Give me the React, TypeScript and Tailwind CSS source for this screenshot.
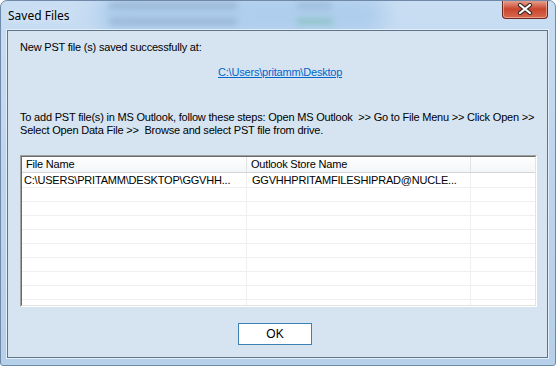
import React from "react";

const rows = Array.from({ length: 10 });

export default function App() {
  return (
    <div className="w-[556px] h-[366px] bg-white">
      <div className="relative w-[556px] h-[366px] flex flex-col overflow-hidden rounded-t-[7px] rounded-b-[3px] border border-[#6f8aa8] bg-gradient-to-b from-[#c9def3] via-[#bcd4ed] to-[#b7d0ea]">
        {/* blurred glass behind the title bar */}
        <div className="absolute left-[95px] top-[-6px] w-[290px] h-[40px] rounded-full bg-[#a7c9ec] blur-[10px] opacity-80" />
        <div className="absolute left-[108px] top-[1px] w-[128px] h-[7px] bg-[#5c7894] blur-[3px] opacity-25" />
        <div className="absolute left-[108px] top-[17px] w-[128px] h-[7px] bg-[#5c7894] blur-[3px] opacity-25" />
        <div className="absolute left-[296px] top-[1px] w-[34px] h-[7px] bg-[#5c7894] blur-[3px] opacity-20" />
        <div className="absolute left-[296px] top-[17px] w-[36px] h-[7px] bg-[#4fb07a] blur-[3px] opacity-30" />

        {/* title bar */}
        <div className="relative h-[29px] flex items-center pl-[7px] shrink-0">
          <span className="text-[12px] text-black [font-family:'Noto_Sans',sans-serif] [text-shadow:0_0_6px_#eef5fc]">
            Saved Files
          </span>
          <button className="absolute top-[-1px] right-[7px] w-[46px] h-[19px] rounded-b-[4px] border border-t-0 border-[#6b2a22] bg-gradient-to-b from-[#e7a898] via-[#c9452d] to-[#d66a4f] flex items-center justify-center shadow-[inset_0_0_0_1px_rgba(255,210,200,0.5)]">
            <svg width="16" height="12" viewBox="0 0 16 12">
              <path d="M3 2 L13 10 M13 2 L3 10" stroke="#3a2a28" strokeWidth="4.2" strokeLinecap="round" />
              <path d="M3 2 L13 10 M13 2 L3 10" stroke="#ffffff" strokeWidth="2.2" strokeLinecap="round" />
            </svg>
          </button>
        </div>

        {/* client area */}
        <div className="relative flex-1 pl-[6px] pr-[7px] pb-[7px]">
          <div className="h-full border border-[#5f7389] shadow-[0_0_0_1px_#e4eefa] bg-[#d6e4f2] flex flex-col pl-[12px] text-[11px] leading-[13px] tracking-[-0.2px] text-black [font-family:'Liberation_Sans',Arial,sans-serif]">
            <p className="mt-[10px] whitespace-nowrap">New PST file (s) saved successfully at:</p>
            <a className="mt-[12px] ml-[198px] w-fit whitespace-nowrap text-[#0066cc] underline cursor-pointer">
              C:\Users\pritamm\Desktop
            </a>
            <p className="mt-[32px] whitespace-nowrap">
              To add PST file(s) in MS Outlook, follow these steps: Open MS Outlook &nbsp;&gt;&gt; Go to File Menu &gt;&gt; Click Open &gt;&gt;
              <br />
              Select Open Data File &gt;&gt; &nbsp;Browse and select PST file from drive.
            </p>

            {/* list view */}
            <div className="mt-[18px] w-[517px] h-[152px] border-t border-l border-[#a0a0a0] border-r border-b border-r-white border-b-white">
              <div className="h-full border-t border-l border-[#696969] border-r border-b border-r-[#e3e3e3] border-b-[#e3e3e3] bg-white overflow-hidden">
                <div className="flex h-[16px] border-b border-[#d5d5d5] bg-gradient-to-b from-white to-[#f4f5f7]">
                  <div className="w-[225px] border-r border-[#e2e3e5] pl-[4px] flex items-center">File Name</div>
                  <div className="w-[224px] border-r border-[#e2e3e5] pl-[4px] flex items-center">Outlook Store Name</div>
                  <div className="flex-1" />
                </div>
                {rows.map((_, i) => (
                  <div key={i} className={`flex ${i === 0 ? "h-[15px]" : "h-[14px]"} border-b border-[#efefef]`}>
                    <div className="w-[225px] border-r border-[#efefef] pl-[2px] flex items-center whitespace-nowrap">
                      {i === 0 ? "C:\\USERS\\PRITAMM\\DESKTOP\\GGVHH..." : ""}
                    </div>
                    <div className="w-[224px] border-r border-[#efefef] pl-[5px] flex items-center whitespace-nowrap">
                      {i === 0 ? "GGVHHPRITAMFILESHIPRAD@NUCLE..." : ""}
                    </div>
                    <div className="flex-1" />
                  </div>
                ))}
              </div>
            </div>

            <button className="mt-[16px] ml-[218px] w-[74px] h-[22px] border border-[#3c7fb1] bg-white flex items-center justify-center text-[12px] tracking-normal">
              OK
            </button>
          </div>
        </div>
      </div>
    </div>
  );
}
